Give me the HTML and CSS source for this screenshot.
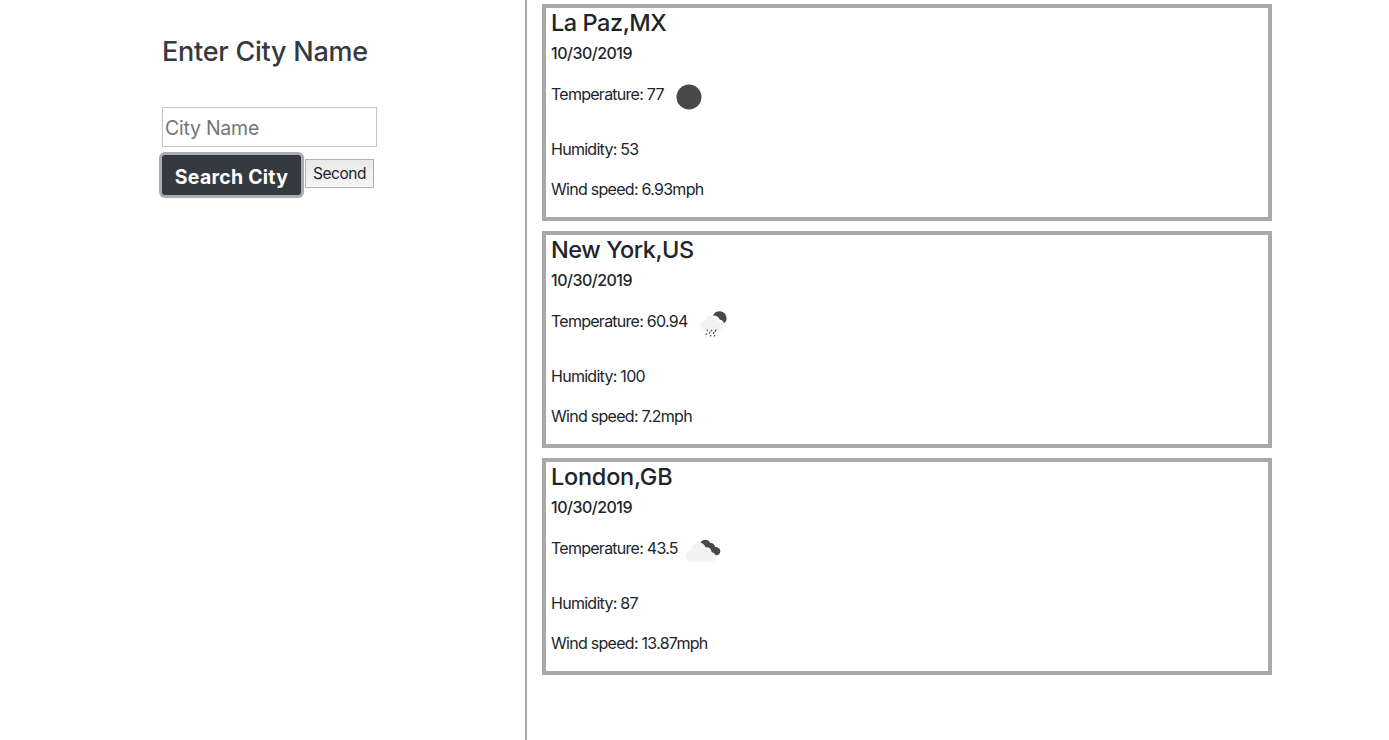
FILE: index.html
```html
<!DOCTYPE html>
<html lang="en">
<head>
<meta charset="utf-8">
<title>Weather Search</title>
<link rel="stylesheet" href="styles.css">
</head>
<body>
<main class="page">
  <section class="search">
    <h1 class="search-title">Enter City Name</h1>
    <input class="city-input" type="text" placeholder="City Name">
    <div class="actions">
      <button class="btn-search">Search City</button>
      <button class="btn-second">Second</button>
    </div>
  </section>
  <section class="results">
    <article class="card">
      <h2 class="city">La Paz,MX</h2>
      <p class="date">10/30/2019</p>
      <div class="temp"><span>Temperature: 77</span>
        <svg class="icon" viewBox="0 0 50 50"><circle cx="25" cy="25" r="12.5" fill="#48484a"/></svg>
      </div>
      <p class="line">Humidity: 53</p>
      <p class="line">Wind speed: 6.93mph</p>
    </article>
    <article class="card">
      <h2 class="city">New York,US</h2>
      <p class="date">10/30/2019</p>
      <div class="temp"><span>Temperature: 60.94</span>
        <svg class="icon" viewBox="0 0 50 50">
          <path d="M25 16.500C26 13.800 28.500 12.300 31.500 12.300a7 7 0 0 1 5.800 10.900l-1.300 1.100c-.6-2-2-3.400-4.300-3.700-.7-2.500-3-4-6.700-4.100Z" fill="#48484a"/>
          <path d="M16.500 30.500a4.700 4.700 0 0 1-.8-9.200c.5-.2 1-.2 1.500-.2a6.500 6.500 0 0 1 12.500 1c3 0 5.800 1.800 5.800 4.300 0 2.400-1.900 4.100-4.500 4.100Z" fill="#f2f2f2"/>
          <path d="M19.500 31l-.3.7M23.800 31l-.3.700M28 31l-.8 1.300M22 33l-.7 1.200M26 33.500l-.6 1M18.300 34.700l-.3.700M22.800 36.300l-.4.700M26.800 36.300l-.4.700" stroke="#48484a" stroke-width="1.200" stroke-linecap="round"/>
        </svg>
      </div>
      <p class="line">Humidity: 100</p>
      <p class="line">Wind speed: 7.2mph</p>
    </article>
    <article class="card">
      <h2 class="city city-wide">London,GB</h2>
      <p class="date">10/30/2019</p>
      <div class="temp"><span>Temperature: 43.5</span>
        <svg class="icon" viewBox="0 0 50 50">
          <path d="M22.500 17c.8-2 2.600-3.200 4.800-3.200 2.400 0 4.200 1.200 4.900 3.300 2.500-.2 4.500 1.500 4.900 3.900 2.800-.1 5.200 1.600 5.200 4.200 0 2.300-1.700 4.100-4.200 4.100-2 0-3.500-.8-4.300-2.500Z" fill="#48484a"/>
          <path d="M13.500 35.500a5.600 5.600 0 0 1-.3-11.200c.7-5 3.600-7.700 7.300-7.700 3.600 0 6 2 7 4.800 3.700-.4 6 1.700 6.200 4.800 2.600.3 4 2.200 4 4.500 0 2.700-1.900 4.800-4.700 4.800Z" fill="#f2f2f2"/>
        </svg>
      </div>
      <p class="line">Humidity: 87</p>
      <p class="line">Wind speed: 13.87mph</p>
    </article>
  </section>
</main>
</body>
</html>
```
FILE: styles.css
```css
* { box-sizing: border-box; }
body {
  margin: 0;
  background: #fff;
  color: #212529;
  font-family: Inter, "Liberation Sans", sans-serif;
  font-size: 16px;
}
h1, h2, p { margin: 0; }
.page { display: flex; height: 740px; }
.search { width: 525px; padding: 35px 0 0 162px; }
.search-title {
  color: #343a40;
  font-size: 27px;
  font-weight: 500;
  line-height: 34px;
  letter-spacing: -0.25px;
  margin-bottom: 38px;
}
.city-input {
  display: block;
  width: 215px;
  height: 40px;
  padding: 3px 2px 1px;
  border: 1px solid #c4c4c4;
  border-radius: 0;
  font: 400 19.5px Inter, sans-serif;
  letter-spacing: -0.25px;
}
.city-input::placeholder { color: #757575; }
.actions { display: flex; align-items: flex-start; gap: 4px; margin-top: 8px; }
.btn-search {
  width: 139px;
  height: 40px;
  padding: 4px 0 0;
  border: 0;
  border-radius: 3px;
  background: #343a40;
  box-shadow: 0 0 0 3px #a9adb0;
  color: #fff;
  font: 700 19.5px Inter, sans-serif;
  letter-spacing: 0.25px;
}
.btn-second {
  width: 69px;
  height: 29px;
  margin-top: 4px;
  padding: 0;
  border: 1px solid #b0b0b0;
  border-radius: 0;
  background: linear-gradient(#e9e9e9, #f5f5f5);
  color: #212529;
  font: 400 15.5px Inter, sans-serif;
  letter-spacing: -0.5px;
}
.results {
  display: flex;
  flex-direction: column;
  gap: 10px;
  width: 747px;
  padding: 4px 0 0 15px;
  border-left: 2px solid #a9a9a9;
}
.card {
  height: 217px;
  padding: 0 5px;
  border: 4px solid #a9a9a9;
}
.city { font-size: 23.5px; font-weight: 500; line-height: 29px; letter-spacing: -0.45px; }
.city-wide { letter-spacing: -0.25px; }
.date { font-size: 16px; font-weight: 500; line-height: 33px; letter-spacing: -0.5px; }
.temp { display: flex; height: 52px; margin-bottom: 7px; letter-spacing: -0.74px; line-height: 49px; }
.icon { width: 50px; height: 50px; margin: 1.5px 0 0 0.5px; }
.line { line-height: 40px; letter-spacing: -0.72px; }
```
